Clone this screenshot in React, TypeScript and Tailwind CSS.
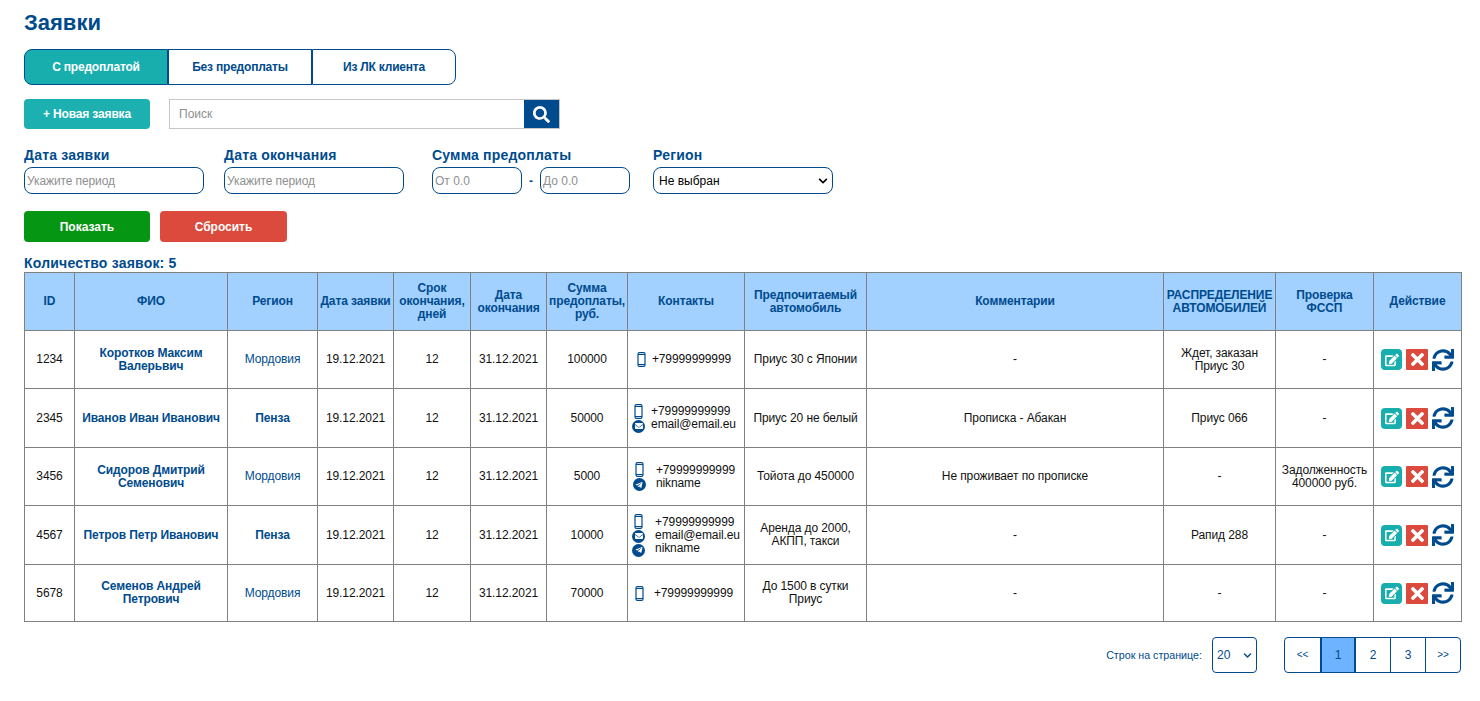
import { FaSearch, FaTimes, FaSync, FaEdit, FaTelegramPlane, FaEnvelope, FaChevronDown } from 'react-icons/fa'

type Contact = 'phone' | 'mail' | 'tg'

type Row = {
  id: string
  name: string
  region: string
  bold: boolean
  sum: string
  contacts: [Contact, string][]
  gap: boolean
  car: string
  comment: string
  dist: string
  fssp: string
}

const ROWS: Row[] = [
  { id: '1234', name: 'Коротков Максим Валерьвич', region: 'Мордовия', bold: false, sum: '100000', contacts: [['phone', '+79999999999']], gap: false, car: 'Приус 30 с Японии', comment: '-', dist: 'Ждет, заказан Приус 30', fssp: '-' },
  { id: '2345', name: 'Иванов Иван Иванович', region: 'Пенза', bold: true, sum: '50000', contacts: [['phone', '+79999999999'], ['mail', 'email@email.eu']], gap: false, car: 'Приус 20 не белый', comment: 'Прописка - Абакан', dist: 'Приус 066', fssp: '-' },
  { id: '3456', name: 'Сидоров Дмитрий Семенович', region: 'Мордовия', bold: false, sum: '5000', contacts: [['phone', '+79999999999'], ['tg', 'nikname']], gap: true, car: 'Тойота до 450000', comment: 'Не проживает по прописке', dist: '-', fssp: 'Задолженность 400000 руб.' },
  { id: '4567', name: 'Петров Петр Иванович', region: 'Пенза', bold: true, sum: '10000', contacts: [['phone', '+79999999999'], ['mail', 'email@email.eu'], ['tg', 'nikname']], gap: true, car: 'Аренда до 2000, АКПП, такси', comment: '-', dist: 'Рапид 288', fssp: '-' },
  { id: '5678', name: 'Семенов Андрей Петрович', region: 'Мордовия', bold: false, sum: '70000', contacts: [['phone', '+79999999999']], gap: true, car: 'До 1500 в сутки Приус', comment: '-', dist: '-', fssp: '-' },
]

const HEADERS: [string, number][] = [
  ['ID', 50], ['ФИО', 153], ['Регион', 90], ['Дата заявки', 76], ['Срок окончания, дней', 77], ['Дата окончания', 76],
  ['Сумма предоплаты, руб.', 81], ['Контакты', 117], ['Предпочитаемый автомобиль', 122], ['Комментарии', 297],
  ['РАСПРЕДЕЛЕНИЕ АВТОМОБИЛЕЙ', 112], ['Проверка ФССП', 98], ['Действие', 88],
]

const ROW_HEIGHTS = ['h-[58px]', 'h-[59px]', 'h-[58px]', 'h-[59px]', 'h-[57px]']

function ContactIcon({ type }: { type: Contact }) {
  if (type === 'phone') {
    return (
      <svg width="9" height="15" viewBox="0 0 9 15" className="text-[#004b8d]">
        <rect x="1" y="0.6" width="7" height="13.8" rx="1.4" fill="none" stroke="currentColor" strokeWidth="1.2" />
        <rect x="1" y="2" width="7" height="1" fill="currentColor" />
        <rect x="1" y="12" width="7" height="1" fill="currentColor" />
      </svg>
    )
  }
  return (
    <span className="flex h-[13px] w-[13px] items-center justify-center rounded-full bg-[#004b8d] text-white">
      {type === 'mail' ? <FaEnvelope className="h-[8px] w-[8px]" /> : <FaTelegramPlane className="h-[8px] w-[8px]" />}
    </span>
  )
}

function Contacts({ row }: { row: Row }) {
  return (
    <div className={`flex items-center justify-center ${row.gap ? 'gap-[10px]' : 'gap-[6px]'} ${row.contacts.length < 3 ? 'pr-[4px]' : ''}`}>
      <div className="flex flex-col items-center gap-[1px]">
        {row.contacts.map(([type], i) => (
          <ContactIcon key={i} type={type} />
        ))}
      </div>
      <div className="text-left leading-[13px]">
        {row.contacts.map(([, value], i) => (
          <div key={i}>{value}</div>
        ))}
      </div>
    </div>
  )
}

export default function App() {
  return (
    <div className="h-[701px] overflow-hidden bg-white pl-6 pr-[19px] font-['Liberation_Sans',Arial,sans-serif] text-xs text-[#111]">
      <h1 className="pt-[10px] text-[22px] leading-[26px] font-bold text-[#004b8d]">Заявки</h1>

      <div className="mt-[13px] flex h-9 w-[432px] text-xs font-bold tracking-[-0.2px] text-[#004b8d]">
        <button className="w-[144px] rounded-l-lg border border-[#004b8d] bg-[#18aeae] text-white">С предоплатой</button>
        <button className="w-[144px] border border-[#004b8d] bg-white">Без предоплаты</button>
        <button className="w-[144px] rounded-r-lg border border-[#004b8d] bg-white">Из ЛК клиента</button>
      </div>

      <div className="mt-[14px] flex h-[30px] items-stretch">
        <button className="w-[126px] rounded bg-[#1cb0b0] text-xs font-bold tracking-[-0.15px] text-white">+ Новая заявка</button>
        <div className="ml-[19px] flex w-[391px] border border-[#c6c6c6]">
          <div className="flex flex-1 items-center pl-[9px] text-[#8f8f8f]">Поиск</div>
          <div className="flex w-[35px] items-center justify-center bg-[#004b8d] text-white">
            <FaSearch className="h-[17px] w-[17px]" />
          </div>
        </div>
      </div>

      <div className="mt-[17px] flex">
        <div className="w-[180px]">
          <div className="text-sm leading-[18px] font-bold tracking-[0.2px] text-[#004b8d]">Дата заявки</div>
          <div className="mt-[3px] flex h-[27px] items-center rounded-lg border border-[#004b8d] pl-[2px] tracking-[-0.1px] text-[#8f8f8f]">Укажите период</div>
        </div>
        <div className="ml-5 w-[180px]">
          <div className="text-sm leading-[18px] font-bold tracking-[0.2px] text-[#004b8d]">Дата окончания</div>
          <div className="mt-[3px] flex h-[27px] items-center rounded-lg border border-[#004b8d] pl-[2px] tracking-[-0.1px] text-[#8f8f8f]">Укажите период</div>
        </div>
        <div className="ml-7 w-[198px]">
          <div className="text-sm leading-[18px] font-bold tracking-[0.2px] text-[#004b8d]">Сумма предоплаты</div>
          <div className="mt-[3px] flex h-[27px] items-center">
            <div className="flex h-full w-[90px] items-center rounded-lg border border-[#004b8d] pl-[2px] text-[#8f8f8f]">От 0.0</div>
            <div className="w-[18px] text-center font-bold text-[#004b8d]">-</div>
            <div className="flex h-full w-[90px] items-center rounded-lg border border-[#004b8d] pl-[2px] text-[#8f8f8f]">До 0.0</div>
          </div>
        </div>
        <div className="ml-[23px] w-[180px]">
          <div className="text-sm leading-[18px] font-bold tracking-[0.2px] text-[#004b8d]">Регион</div>
          <div className="mt-[3px] flex h-[27px] items-center justify-between rounded-lg border border-[#004b8d] pr-[4px] pl-[5px] text-black">
            Не выбран
            <FaChevronDown className="h-[10px] w-[10px]" />
          </div>
        </div>
      </div>

      <div className="mt-[17px] flex h-[31px] text-xs font-bold text-white">
        <button className="w-[126px] rounded bg-[#059614]">Показать</button>
        <button className="ml-[10px] w-[127px] rounded bg-[#db4a3c]">Сбросить</button>
      </div>

      <div className="mt-[13px] h-[16px] text-sm leading-[16px] font-bold tracking-[0.2px] text-[#004b8d]">Количество заявок: 5</div>

      <table className="mt-[1px] w-[1437px] table-fixed border-collapse text-center leading-[13px] tracking-[-0.1px]">
        <colgroup>
          {HEADERS.map(([title, width]) => (
            <col key={title} style={{ width }} />
          ))}
        </colgroup>
        <thead>
          <tr className="h-[58px] bg-[#a2d0ff] font-bold text-[#004b8d]">
            {HEADERS.map(([title]) => (
              <th key={title} className="border border-[#808080] px-[2px] font-bold">{title}</th>
            ))}
          </tr>
        </thead>
        <tbody>
          {ROWS.map((row, i) => (
            <tr key={row.id} className={ROW_HEIGHTS[i]}>
              <td className="border border-[#808080]">{row.id}</td>
              <td className="border border-[#808080] px-[5px] font-bold text-[#004b8d]">{row.name}</td>
              <td className={`border border-[#808080] text-[#004b8d] ${row.bold ? 'font-bold' : ''}`}>{row.region}</td>
              <td className="border border-[#808080]">19.12.2021</td>
              <td className="border border-[#808080]">12</td>
              <td className="border border-[#808080]">31.12.2021</td>
              <td className="border border-[#808080]">{row.sum}</td>
              <td className="border border-[#808080]"><Contacts row={row} /></td>
              <td className="border border-[#808080] px-[4px]">{row.car}</td>
              <td className="border border-[#808080]">{row.comment}</td>
              <td className="border border-[#808080] px-[14px]">{row.dist}</td>
              <td className="border border-[#808080] px-[2px]">{row.fssp}</td>
              <td className="border border-[#808080]">
                <div className="flex items-center justify-center gap-[4px]">
                  <span className="flex h-[21px] w-[21px] items-center justify-center rounded-sm bg-[#18aeae] text-white">
                    <FaEdit className="h-[14px] w-[14px]" />
                  </span>
                  <span className="flex h-[21px] w-[22px] items-center justify-center rounded-[1px] bg-[#db4a3c] text-white">
                    <FaTimes className="h-[19px] w-[19px]" />
                  </span>
                  <FaSync className="h-[22px] w-[22px] text-[#004b8d]" />
                </div>
              </td>
            </tr>
          ))}
        </tbody>
      </table>

      <div className="mt-[15px] flex h-9 w-[1437px] items-center justify-end text-[#004b8d]">
        <span className="text-[10.7px]">Строк на странице:</span>
        <div className="ml-[10px] flex h-9 w-[45px] items-center justify-between rounded-sm border border-[#004b8d] pr-[4px] pl-[4px] text-xs">
          20
          <FaChevronDown className="h-[9px] w-[9px]" />
        </div>
        <div className="ml-[27px] flex h-9 w-[177px] rounded-sm border border-[#004b8d] text-xs">
          <div className="flex w-[35px] items-center justify-center text-[10px]">&lt;&lt;</div>
          <div className="flex w-[36px] items-center justify-center border-x-2 border-[#004b8d] bg-[#6db3ff]">1</div>
          <div className="flex w-[35px] items-center justify-center border-r border-[#004b8d]">2</div>
          <div className="flex w-[35px] items-center justify-center border-r border-[#004b8d]">3</div>
          <div className="flex flex-1 items-center justify-center text-[10px]">&gt;&gt;</div>
        </div>
      </div>
    </div>
  )
}
